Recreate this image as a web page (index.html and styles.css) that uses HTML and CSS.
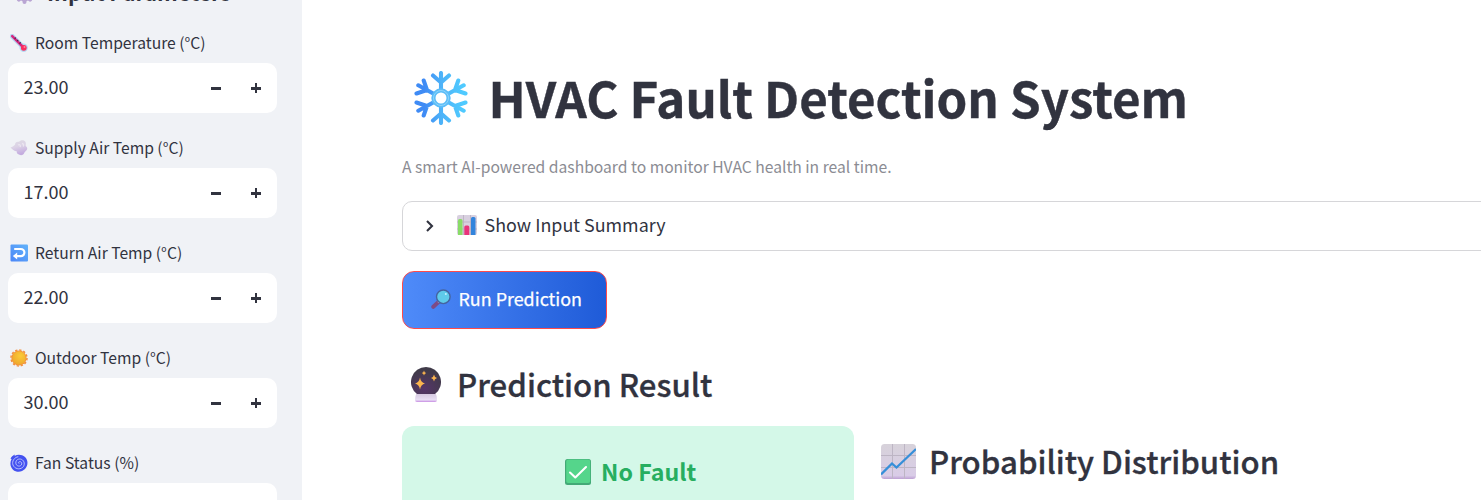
FILE: index.html
```html
<!DOCTYPE html>
<html lang="en">
<head>
<meta charset="utf-8">
<title>HVAC Fault Detection System</title>
<link rel="stylesheet" href="styles.css">
</head>
<body>
<div class="app">
<aside class="sidebar">
  <h2 class="side-title">
    <svg class="cog" viewBox="0 0 24 24"><g fill="#b9a5d3"><circle cx="12" cy="12" r="8.5"/><g stroke="#b9a5d3" stroke-width="4.6" stroke-linecap="round"><path d="M12 3v18M3 12h18M5.6 5.6l12.8 12.8M18.4 5.6L5.6 18.4"/></g></g><circle cx="12" cy="12" r="4" fill="#f0f2f6"/></svg>
    <span>Input Parameters</span>
  </h2>
  <div class="field">
    <div class="label"><svg class="ico" viewBox="0 0 18 18"><path d="M2.2 2.2L12.8 12.8" stroke="#b5d9f3" stroke-width="4.8" stroke-linecap="round"/><circle cx="13.7" cy="13.7" r="4.2" fill="#b5d9f3"/><path d="M2.2 2.2L12.500 12.500" stroke="#d6287f" stroke-width="2.500" stroke-linecap="round"/><circle cx="13.8" cy="13.8" r="2.9" fill="#f92f60"/><path d="M5.8 3.5L4.7 4.8M8.2 6L7 7.2M10.7 8.3L9.4 9.6" stroke="#47224d" stroke-width="1.1"/><circle cx="14.5" cy="13" r="1" fill="#ff8297"/></svg><span>Room Temperature (°C)</span></div>
    <div class="input"><span class="value">23.00</span><button class="step minus" aria-label="Decrease"></button><button class="step plus" aria-label="Increase"></button></div>
  </div>
  <div class="field">
    <div class="label"><svg class="ico" viewBox="0 0 18 18"><defs><linearGradient id="air" x1="0" y1="0" x2=".3" y2="1"><stop offset="0" stop-color="#dedbe3"/><stop offset=".5" stop-color="#dcd3e6"/><stop offset="1" stop-color="#c4acdf"/></linearGradient></defs><path d="M.5 8.500C2.500 8 4 7 5 5.800 5 3.500 7 2.200 9 2.800c1.200-2 4.800-2.300 6.200-.3 1.300 1.700.2 3.300.5 4.500 1.800 1 2 3 .8 4.200C15.500 12.500 14.500 13 14 14.500c-1 2-3.500 2-5 1-1.800-.3-2.500-1.800-2.300-3.200C4.500 12.200 2 10.200.5 8.500z" fill="url(#air)"/><path d="M8 6c2-1 3 .5 2 2M12 4.500c1.700.3 2 1.800 1.200 3" fill="none" stroke="#ebe6f0" stroke-width="1.300"/></svg><span>Supply Air Temp (°C)</span></div>
    <div class="input"><span class="value">17.00</span><button class="step minus" aria-label="Decrease"></button><button class="step plus" aria-label="Increase"></button></div>
  </div>
  <div class="field">
    <div class="label"><svg class="ico" viewBox="0 0 18 18"><defs><linearGradient id="ret" x1="0" y1="1" x2="1" y2="0"><stop offset="0" stop-color="#4b86f7"/><stop offset="1" stop-color="#62b3fa"/></linearGradient></defs><rect x=".5" y=".5" width="17.500" height="17" rx="1" fill="url(#ret)"/><path d="M4.200 5h6.600a3.600 3.600 0 0 1 0 7.200H6" fill="none" stroke="#fff" stroke-width="2.200"/><path d="M2.800 12.100L7.200 8.600v7z" fill="#fff"/></svg><span>Return Air Temp (°C)</span></div>
    <div class="input"><span class="value">22.00</span><button class="step minus" aria-label="Decrease"></button><button class="step plus" aria-label="Increase"></button></div>
  </div>
  <div class="field">
    <div class="label"><svg class="ico" viewBox="0 0 18 18"><defs><radialGradient id="sun" cx=".6" cy=".35" r=".7"><stop offset="0" stop-color="#fbcb39"/><stop offset="1" stop-color="#eea62c"/></radialGradient></defs><circle cx="9" cy="9" r="7.600" fill="#f2913f"/><circle cx="9" cy="9" r="8" fill="none" stroke="#f2913f" stroke-width="1.500" stroke-dasharray="2.300 1.890"/><circle cx="9" cy="9" r="6.800" fill="url(#sun)"/></svg><span>Outdoor Temp (°C)</span></div>
    <div class="input"><span class="value">30.00</span><button class="step minus" aria-label="Decrease"></button><button class="step plus" aria-label="Increase"></button></div>
  </div>
  <div class="field">
    <div class="label"><svg class="ico" viewBox="0 0 18 18"><path d="M5 .5C3 1 1 3 .5 4.800L1.600 5C-.3 8.200 0 13 3 15.700c3.500 3 9 2.500 12-.6C18.300 11.500 18.300 6 15 3 12 .3 7.500 0 4.500 2z" fill="#4452f0"/><path d="M9.500 9.200c-1.300.6-1.500-1.300 0-1.600 2-.3 3 2 1.700 3.500-1.800 2-5.200.8-5.400-2C5.600 6 8.500 4.300 11.300 5.300c3.500 1.400 3.900 5.900 1.200 8.200-3.100 2.500-8 1.300-9.500-2.500C1.600 7.400 4.300 3.300 8.300 2.700" fill="none" stroke="#c9d0ff" stroke-width=".85"/></svg><span>Fan Status (%)</span></div>
    <div class="input"></div>
  </div>
</aside>
<main class="main">
  <h1 class="title">
    <svg class="flake" viewBox="0 0 54 54"><defs><linearGradient id="ice" gradientUnits="userSpaceOnUse" x1="0" y1="27" x2="54" y2="27"><stop offset=".2" stop-color="#3f8bf5"/><stop offset=".5" stop-color="#4db2f8"/><stop offset=".9" stop-color="#4fcaff"/></linearGradient></defs><g fill="none" stroke="url(#ice)" stroke-width="4.100" stroke-linecap="round" stroke-linejoin="round"><path d="M27 20V2M19 4.500l8 7 8-7M27 34v18M19 49.500l8-7 8 7"/><path d="M21 23.500L4.300 14.300M9.700 9.500L13 19 2.500 22.500M33 23.500L49.700 14.300M44.300 9.500L41 19 51.500 22.500"/><path d="M21 30.500L4.300 39.700M9.700 44.500L13 35 2.500 31.500M33 30.500L49.700 39.700M44.300 44.500L41 35 51.500 31.500"/></g><circle cx="27" cy="27" r="7.600" fill="#fff" stroke="#5bbdf8" stroke-width="4.200"/><circle cx="27" cy="27" r="7.500" fill="none" stroke="#8fd5fb" stroke-width="1"/></svg>
    <span>HVAC Fault Detection System</span>
  </h1>
  <p class="caption">A smart AI-powered dashboard to monitor HVAC health in real time.</p>
  <div class="expander">
    <svg class="chev" viewBox="0 0 10 14"><path d="M2 2l5 5-5 5" fill="none" stroke="#31333f" stroke-width="2.100"/></svg>
    <svg class="bars" viewBox="0 0 20 20"><rect width="20" height="20" rx="2" fill="#d8d0df"/><path d="M0 7h20M0 14h20M6.500 0v20M13.500 0v20" stroke="#b9aebf" stroke-width=".8"/><path d="M1 20V5.500Q1 4 2.500 4H4q1.500 0 1.500 1.500V20z" fill="#89dc67"/><path d="M7.300 20v-8q0-1.500 1.500-1.500h2q1.500 0 1.500 1.500v8z" fill="#e9347b"/><path d="M14 20V3.500Q14 2 15.500 2h1.500q1.500 0 1.500 1.500V20z" fill="#3284dc"/></svg>
    <span>Show Input Summary</span>
  </div>
  <button class="run">
    <svg class="lens" viewBox="0 0 20 20"><path d="M8 12.500L2.300 17.800" stroke="#7d4b86" stroke-width="4" stroke-linecap="round"/><path d="M9 11.500l-2 2" stroke="#a4a5c8" stroke-width="1.800"/><circle cx="12.300" cy="7.800" r="6.800" fill="#5fcbea" stroke="#45649f" stroke-width="1.400"/><circle cx="14.800" cy="5" r="1" fill="#c4f2ff"/></svg>
    <span>Run Prediction</span>
  </button>
  <h2 class="heading">
    <svg class="ball" viewBox="0 0 30 35"><defs><radialGradient id="orb" cx=".45" cy=".8" r=".7"><stop offset="0" stop-color="#563569"/><stop offset="1" stop-color="#403b49"/></radialGradient><linearGradient id="base" x1="0" y1="0" x2="0" y2="1"><stop offset="0" stop-color="#d4c7df"/><stop offset=".75" stop-color="#e9dff4"/><stop offset="1" stop-color="#c78be3"/></linearGradient></defs><path d="M5.500 26.500h19q1.500 2 1.500 6Q26 35 24 35H6q-2 0-2-2.500Q4 29 5.500 26.500z" fill="url(#base)"/><path d="M15 0a15 15 0 0 1 9 27H6A15 15 0 0 1 15 0z" fill="url(#orb)"/><g fill="#fbb54e"><path d="M9 10.500q.8 5 5 6-4.200 1-5 6-.8-5-5-6 4.200-1 5-6zM23 7.500q.4 2.800 3 3.500-2.600.7-3 3.500-.4-2.800-3-3.500 2.600-.7 3-3.500zM13 3.500q.3 2 2.200 2.500-1.900.5-2.200 2.500-.3-2-2.200-2.500 1.900-.5 2.200-2.500z"/></g></svg>
    <span>Prediction Result</span>
  </h2>
  <div class="columns">
    <div class="result">
      <svg class="check" viewBox="0 0 26 26"><rect width="26" height="26" rx="2.500" fill="#43a976"/><rect x="1.200" y=".5" width="24" height="23.500" rx="2" fill="#55d58b"/><path d="M5 13.500l5.300 5L21 8" fill="none" stroke="#fff" stroke-width="2.100" stroke-linecap="round" stroke-linejoin="round"/></svg>
      <span>No Fault</span>
    </div>
    <h2 class="heading chart-heading">
      <svg class="trend" viewBox="0 0 35 35"><defs><linearGradient id="paper" x1="0" y1="0" x2="0" y2="1"><stop offset="0" stop-color="#d7d2da"/><stop offset=".9" stop-color="#d9cce7"/><stop offset="1" stop-color="#bda0d3"/></linearGradient></defs><rect width="35" height="35" rx="3.500" fill="url(#paper)"/><path d="M0 11.500h35M0 23.500h35M11.500 0v35M23.500 0v35" stroke="#bdb5c4"/><path d="M0 30.500L11 19.500l4.500 4L35 5" fill="none" stroke="#368fd9" stroke-width="2.300"/></svg>
      <span>Probability Distribution</span>
    </h2>
  </div>
</main>
</div>
</body>
</html>
```
FILE: styles.css
```css
* { box-sizing: border-box; }
body { margin: 0; background: #fff; color: #31333f; font-family: "Noto Sans CJK SC", "Open Sans", sans-serif; }
h1, h2, p { margin: 0; }
button { font: inherit; }
svg { flex: none; display: block; }
span { white-space: nowrap; }
.app { display: flex; width: 1481px; height: 500px; overflow: hidden; }
.sidebar { width: 302px; flex: none; background: #f0f2f6; padding: 0 25px 0 8px; overflow: hidden; }
.side-title { display: flex; align-items: center; gap: 12px; height: 30px; margin: -22px 0 21px; padding-left: 6px; font-size: 21.5px; font-weight: 700; line-height: 30px; }
.side-title span { line-height: 28px; height: 30px; }
.cog { width: 21px; height: 24px; margin-top: 2px; }
.field { height: 105px; }
.label { display: flex; align-items: center; gap: 7px; height: 28px; margin-bottom: 6px; padding-left: 2px; font-size: 15.67px; line-height: 28px; }
.ico { width: 18px; height: 18px; }
.input { display: flex; align-items: center; height: 50px; padding: 0 1px 0 15.5px; background: #fff; border-radius: 10px; font-size: 18px; line-height: 50px; }
.value { flex: 1; height: 50px; line-height: 47px; }
.step { display: grid; place-items: center; width: 40px; height: 40px; padding: 0; border: 0; background: none; }
.step::before, .plus::after { content: ""; grid-area: 1 / 1; width: 10px; height: 2.6px; background: #31333f; }
.plus::after { width: 2.6px; height: 10px; }
.step::before { height: 3px; }
.main { flex: none; width: 1179px; padding: 60px 0 0 100px; }
.title { display: flex; align-items: center; gap: 20.5px; height: 75px; padding-left: 12px; font-size: 49.2px; font-weight: 700; -webkit-text-stroke: .4px #31333f; }
.title span { height: 75px; line-height: 74px; }
.flake { width: 54px; height: 54px; }
.caption { margin: 18px 0 21px; height: 27px; font-size: 15.67px; line-height: 27px; color: #8b8c93; }
.expander { display: flex; align-items: center; width: 1100px; height: 50px; padding-left: 22px; border: 1px solid #d6d6d9; border-radius: 10px; font-size: 17.9px; }
.expander span { height: 48px; line-height: 44px; }
.chev { width: 10px; height: 14px; margin-right: 22px; }
.bars { width: 20px; height: 20px; margin: 0 7.5px 2px 0; }
.run { display: flex; align-items: center; gap: 7.5px; width: 205px; height: 58px; margin-top: 20px; padding: 0 0 0 28px; border: 1px solid #ff4b4b; border-radius: 12px; background: linear-gradient(90deg, #4f8bf9, #1f5bd8); color: #fff; font-size: 17.9px; font-weight: 400; -webkit-text-stroke: .25px #fff; }
.run span { height: 56px; line-height: 53px; }
.lens { width: 20px; height: 20px; margin-bottom: 3px; }
.heading { display: flex; align-items: center; font-size: 31.2px; font-weight: 500; line-height: 42px; -webkit-text-stroke: .3px #31333f; }
.ball { width: 30px; height: 35px; margin: 0 16px 0 9px; }
.main > .heading { height: 42px; margin-top: 34px; }
.columns { display: flex; gap: 27px; margin-top: 21px; }
.result { display: flex; align-items: center; justify-content: center; gap: 10.5px; width: 452px; height: 92px; padding-left: 5px; border-radius: 12px; background: #d4f8e8; color: #27ae60; font-size: 23.2px; font-weight: 700; }
.result span { height: 36px; line-height: 34px; }
.check { width: 26px; height: 26px; }
.chart-heading { height: 70px; }
.trend { width: 35px; height: 35px; margin-right: 13px; }
```
